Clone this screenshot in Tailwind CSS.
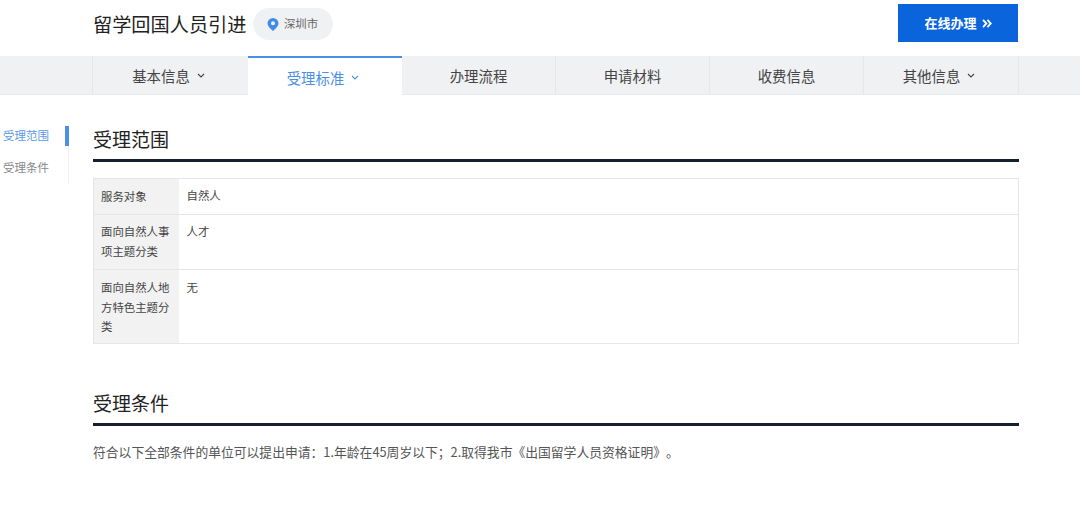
<!DOCTYPE html>
<html lang="zh-CN">
<head>
<meta charset="UTF-8">
<script src="https://cdn.jsdelivr.net/npm/@tailwindcss/browser@4"></script>
<title>留学回国人员引进</title>
</head>
<body class="bg-white font-['Noto_Sans_CJK_SC','Noto_Sans',sans-serif] text-[#333] overflow-hidden">
<div class="w-[1080px] h-[519px] overflow-hidden">
  <!-- header -->
  <div class="h-[56px] pl-[93px] pr-[62px] flex items-start justify-between">
    <div class="flex items-center h-[40px] mt-[4px]">
      <h1 class="text-[19.2px] leading-[40px] text-[#222] font-normal">留学回国人员引进</h1>
      <div class="ml-[6px] h-[32px] w-[80px] rounded-full bg-[#f0f1f3] flex items-center justify-center gap-[5px]">
        <svg width="12" height="13" viewBox="0 0 12 13"><path fill="#3f8cea" fill-rule="evenodd" d="M6 0a5.5 5.5 0 0 1 5.5 5.3c0 3-3.3 5.8-5.5 7.7C3.800 11.100.5 8.300.5 5.300A5.500 5.500 0 0 1 6 0zm0 3.300a2 2 0 1 0 0 4 2 2 0 0 0 0-4z"/></svg>
        <span class="text-[11.4px] text-[#666]">深圳市</span>
      </div>
    </div>
    <a class="mt-[4px] w-[120px] h-[38px] bg-[#0a64dc] text-white font-bold text-[13px] flex items-center justify-center gap-[5px]">
      在线办理
      <svg width="10" height="9" viewBox="0 0 10 9" fill="none" stroke="#fff" stroke-width="1.9"><path d="M1 .8 4.4 4.500 1 8.200M5.400.8 8.800 4.500 5.400 8.200"/></svg>
    </a>
  </div>
  <!-- tabs -->
  <div class="h-[39px] bg-[#f0f1f3] border-b border-[#e8e9eb]">
    <div class="ml-[92px] w-[927px] h-[39px] flex border-l border-r border-[#e6e7e9] text-[14.4px] text-[#444]">
      <div class="w-[155px] h-[39px] pr-[4px] flex items-center justify-center gap-[7px]">基本信息
        <svg width="8" height="5" viewBox="0 0 8 5" fill="none" stroke="#444" stroke-width="1.1"><path d="M1 1 4 4 7 1"/></svg>
      </div>
      <div class="w-[154px] h-[39px] pr-[4px] bg-white border-t-[2px] border-[#4a8fe3] flex items-center justify-center gap-[7px] pt-[2px] text-[#4a8fe3]">受理标准
        <svg width="8" height="5" viewBox="0 0 8 5" fill="none" stroke="#4a8fe3" stroke-width="1.1"><path d="M1 1 4 4 7 1"/></svg>
      </div>
      <div class="w-[154px] flex items-center justify-center border-r border-[#e6e7e9]">办理流程</div>
      <div class="w-[154px] flex items-center justify-center border-r border-[#e6e7e9]">申请材料</div>
      <div class="w-[154px] flex items-center justify-center border-r border-[#e6e7e9]">收费信息</div>
      <div class="flex-1 pr-[4px] flex items-center justify-center gap-[7px]">其他信息
        <svg width="8" height="5" viewBox="0 0 8 5" fill="none" stroke="#444" stroke-width="1.1"><path d="M1 1 4 4 7 1"/></svg>
      </div>
    </div>
  </div>
  <!-- body -->
  <div class="flex mt-[31px]">
    <div class="w-[69px] h-[58px] shrink-0 border-r border-[#eef0f2] relative text-[11.5px] text-[#888]">
      <div class="absolute right-[-1px] top-0 w-[4px] h-[20px] bg-[#4a90e8]"></div>
      <div class="pl-[3px] h-[20px] leading-[18px] text-[#5b9ae8]">受理范围</div>
      <div class="pl-[3px] mt-[12px] h-[20px] leading-[18px]">受理条件</div>
    </div>
    <div class="ml-[24px] w-[926px]">
      <h2 class="text-[19px] leading-[26px] text-[#222] font-normal">受理范围</h2>
      <div class="mt-[7px] h-[3px] bg-[#14202e]"></div>
      <table class="mt-[16px] w-full border border-[#e6e6e6] border-collapse text-[11.4px] text-[#444]">
        <tbody>
          <tr class="h-[36px] border-b border-[#e6e6e6]">
            <td class="w-[85px] bg-[#f2f2f2] px-[7px] pb-[2px] leading-[20px]">服务对象</td>
            <td class="px-[8px] pb-[2px]">自然人</td>
          </tr>
          <tr class="h-[55px] border-b border-[#e6e6e6]">
            <td class="bg-[#f2f2f2] px-[7px] pt-[6px] pb-[8px] leading-[20px] align-top">面向自然人事项主题分类</td>
            <td class="px-[8px] pt-[6px] leading-[20px] align-top">人才</td>
          </tr>
          <tr class="h-[74px]">
            <td class="bg-[#f2f2f2] px-[7px] pt-[8px] pb-[6px] leading-[19.5px] align-top">面向自然人地方特色主题分类</td>
            <td class="px-[8px] pt-[8px] leading-[19.5px] align-top">无</td>
          </tr>
        </tbody>
      </table>
      <h2 class="mt-[46px] text-[19px] leading-[26px] text-[#222] font-normal">受理条件</h2>
      <div class="mt-[7px] h-[3px] bg-[#14202e]"></div>
      <p class="mt-[16px] text-[12.8px] leading-[20px] text-[#555] [text-spacing-trim:space-all]">符合以下全部条件的单位可以提出申请：1.年龄在45周岁以下；2.取得我市《出国留学人员资格证明》。</p>
    </div>
  </div>
</div>
</body>
</html>
